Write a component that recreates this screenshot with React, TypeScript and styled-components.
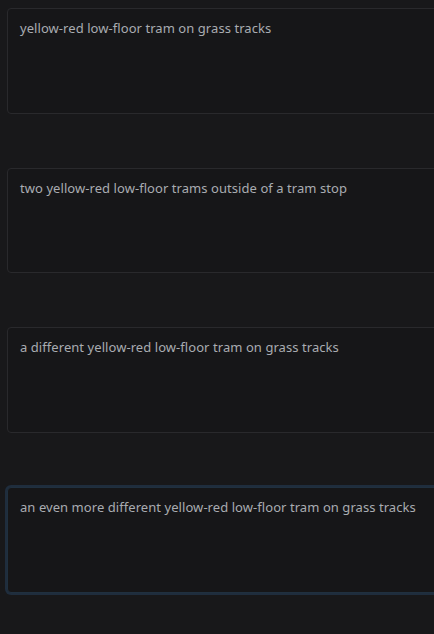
import styled, { createGlobalStyle } from 'styled-components'

const GlobalStyle = createGlobalStyle`
  html, body {
    margin: 0;
    padding: 0;
    background: #18181a;
  }
`

const captions = [
  'yellow-red low-floor tram on grass tracks',
  'two yellow-red low-floor trams outside of a tram stop',
  'a different yellow-red low-floor tram on grass tracks',
  'an even more different yellow-red low-floor tram on grass tracks',
]

// the caption fields are wider than the window, so the list clips them
const List = styled.div`
  display: flex;
  flex-direction: column;
  gap: 54px;
  padding: 8px 0 0 7px;
  width: 100vw;
  height: 634px;
  box-sizing: border-box;
  overflow: hidden;
`

const Caption = styled.div<{ $focused?: boolean }>`
  box-sizing: border-box;
  flex: none;
  width: 450px;
  height: 105.67px;
  padding: 10px 12px;
  background: #161618;
  border: 1px solid ${(p) => (p.$focused ? '#20303f' : '#29292c')};
  border-radius: 4px;
  box-shadow: ${(p) => (p.$focused ? '0 0 0 2px #1f2d3d' : 'none')};
  color: #a9acb1;
  font-family: 'Noto Sans', 'Open Sans', sans-serif;
  font-size: 13px;
  letter-spacing: 0.06px;
  line-height: 18px;
`

export default function App() {
  return (
    <>
      <GlobalStyle />
      <List>
        {captions.map((text, i) => (
          <Caption key={i} $focused={i === captions.length - 1}>
            {text}
          </Caption>
        ))}
      </List>
    </>
  )
}
